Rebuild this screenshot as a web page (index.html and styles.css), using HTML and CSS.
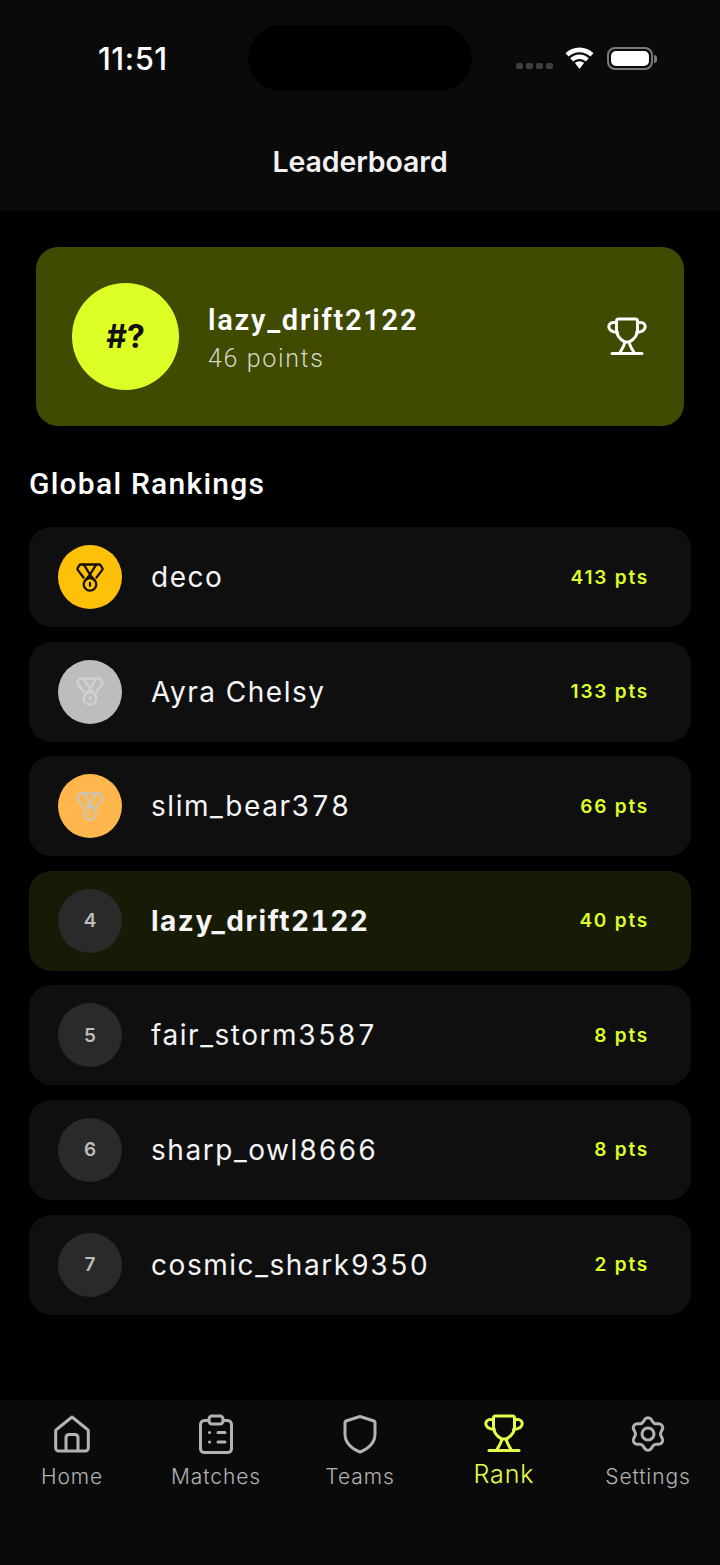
FILE: index.html
```html
<!DOCTYPE html>
<html lang="en">
<head>
<meta charset="utf-8">
<title>Leaderboard</title>
<link rel="stylesheet" href="styles.css">
</head>
<body>
<svg class="sprite" width="0" height="0" aria-hidden="true">
  <defs>
    <symbol id="medal" viewBox="0 0 28 29">
      <path d="M5 1.500h18a2 2 0 0 1 1.700.9l1.500 2.400a2 2 0 0 1-.1 2.300l-5.600 7.400M7.500 14.500L1.900 7.100a2 2 0 0 1-.1-2.300l1.500-2.400A2 2 0 0 1 5 1.500" fill="none" stroke="currentColor" stroke-width="2.300" stroke-linecap="round" stroke-linejoin="round"/>
      <path d="M8 1.800l6 9.700 6-9.700M14 11.500l-3.300 4.500M14 11.500l3.300 4.500" fill="none" stroke="currentColor" stroke-width="2.300" stroke-linejoin="round" stroke-linecap="round"/>
      <circle cx="14" cy="21.300" r="6.300" fill="none" stroke="currentColor" stroke-width="2.300"/>
      <path d="M14 19.800v3" stroke="currentColor" stroke-width="2.300" stroke-linecap="round"/>
    </symbol>
    <symbol id="trophy" viewBox="0 0 40 40">
      <path d="M11.500 2h17a2 2 0 0 1 2 2v8.500c0 6.500-4.500 10.500-8.300 12.500h-4.400C14 23 9.500 19 9.500 12.500V4a2 2 0 0 1 2-2z" fill="none" stroke="currentColor" stroke-width="3" stroke-linejoin="round"/>
      <path d="M9.500 5.500H6a4.200 4.200 0 0 0-4.200 4.200c0 3.300 3 5 8.500 5.800M30.500 5.500H34a4.200 4.200 0 0 1 4.200 4.200c0 3.300-3 5-8.500 5.800" fill="none" stroke="currentColor" stroke-width="3" stroke-linecap="round"/>
      <path d="M17.800 25c-.2 3.500-3 7-5 11M22.200 25c.2 3.500 3 7 5 11" fill="none" stroke="currentColor" stroke-width="3" stroke-linecap="round"/>
      <path d="M5 36.500h30" stroke="currentColor" stroke-width="3" stroke-linecap="round"/>
    </symbol>
  </defs>
</svg>
<div class="screen">
  <header class="top">
    <div class="status">
      <span class="time">11:51</span>
      <div class="island"></div>
      <div class="status-icons">
        <div class="signal"><i></i><i></i><i></i><i></i></div>
        <svg class="wifi" viewBox="0 0 30 23" width="31" height="23">
          <path d="M15 5.300c4.300 0 8.100 1.600 10.900 4.300L29 6.300C25.300 2.700 20.400.6 15 .6S4.700 2.700 1 6.300l3.100 3.300C6.900 6.900 10.700 5.300 15 5.300z" fill="#fff"/>
          <path d="M15 12c2.500 0 4.700 1 6.300 2.500l3-3.200C21.900 9 18.600 7.600 15 7.600S8.100 9 5.700 11.300l3 3.200C10.300 13 12.500 12 15 12z" fill="#fff"/>
          <path d="M15 14.300c-1.800 0-3.300.7-4.500 1.800L15 22l4.500-5.900c-1.200-1.100-2.700-1.800-4.500-1.800z" fill="#fff"/>
        </svg>
        <div class="battery"><div class="battery-fill"></div></div>
        <div class="battery-cap"></div>
      </div>
    </div>
    <h1 class="title">Leaderboard</h1>
  </header>

  <main class="content">
    <section class="hero">
      <div class="hero-rank">#?</div>
      <div class="hero-info">
        <div class="hero-name">lazy_drift2122</div>
        <div class="hero-points">46 points</div>
      </div>
      <svg class="hero-trophy" width="40" height="40"><use href="#trophy"/></svg>
    </section>

    <h2 class="section-title">Global Rankings</h2>

    <ul class="list">
      <li class="row">
        <div class="badge gold"><svg width="28" height="29"><use href="#medal"/></svg></div>
        <span class="name">deco</span><span class="pts">413 pts</span>
      </li>
      <li class="row">
        <div class="badge silver"><svg width="28" height="29"><use href="#medal"/></svg></div>
        <span class="name">Ayra Chelsy</span><span class="pts">133 pts</span>
      </li>
      <li class="row">
        <div class="badge bronze"><svg width="28" height="29"><use href="#medal"/></svg></div>
        <span class="name">slim_bear378</span><span class="pts">66 pts</span>
      </li>
      <li class="row me">
        <div class="badge">4</div>
        <span class="name">lazy_drift2122</span><span class="pts">40 pts</span>
      </li>
      <li class="row">
        <div class="badge">5</div>
        <span class="name">fair_storm3587</span><span class="pts">8 pts</span>
      </li>
      <li class="row">
        <div class="badge">6</div>
        <span class="name">sharp_owl8666</span><span class="pts">8 pts</span>
      </li>
      <li class="row">
        <div class="badge">7</div>
        <span class="name">cosmic_shark9350</span><span class="pts">2 pts</span>
      </li>
    </ul>
  </main>

  <nav class="tabs">
    <div class="tab">
      <svg viewBox="0 0 40 40" width="40" height="40" fill="none" stroke="currentColor" stroke-width="3" stroke-linejoin="round">
        <path d="M20 3L35.500 15.500a2 2 0 0 1 .8 1.600V34a3 3 0 0 1-3 3H6.700a3 3 0 0 1-3-3V17.100a2 2 0 0 1 .8-1.600z"/>
        <path d="M14 37V23.500a3 3 0 0 1 3-3h6a3 3 0 0 1 3 3V37"/>
      </svg>
      <span>Home</span>
    </div>
    <div class="tab">
      <svg viewBox="0 0 40 40" width="40" height="40" fill="none" stroke="currentColor" stroke-width="3" stroke-linecap="round" stroke-linejoin="round">
        <path d="M13 6.500H8.500a4 4 0 0 0-4 4V35a3.500 3.500 0 0 0 3.500 3.500h24a3.500 3.500 0 0 0 3.500-3.500V10.500a4 4 0 0 0-4-4H27"/>
        <rect x="13" y="2" width="14" height="8" rx="3"/>
        <path d="M13.500 18.500h.1M13.500 28h.1M22 18.500h7M22 28h7"/>
      </svg>
      <span>Matches</span>
    </div>
    <div class="tab">
      <svg viewBox="0 0 40 40" width="40" height="40" fill="none" stroke="currentColor" stroke-width="3" stroke-linejoin="round">
        <path d="M20 2.500L34 7a1.500 1.500 0 0 1 1 1.500V20c0 9-6.500 14.500-15 18C11.500 34.500 5 29 5 20V8.500A1.500 1.500 0 0 1 6 7z"/>
      </svg>
      <span>Teams</span>
    </div>
    <div class="tab active">
      <svg width="40" height="40"><use href="#trophy"/></svg>
      <span>Rank</span>
    </div>
    <div class="tab">
      <svg viewBox="0 0 40 40" width="40" height="40" fill="none" stroke="currentColor" stroke-width="3" stroke-linejoin="round">
        <path d="M16.500 3.500a4 4 0 0 1 7 0l1.200 2a4 4 0 0 0 3.500 2h2.500a4 4 0 0 1 3.500 6l-1.200 2.300a4 4 0 0 0 0 4l1.200 2.300a4 4 0 0 1-3.500 6h-2.500a4 4 0 0 0-3.500 2l-1.200 2a4 4 0 0 1-7 0l-1.200-2a4 4 0 0 0-3.500-2H9.300a4 4 0 0 1-3.500-6L7 19.800a4 4 0 0 0 0-4l-1.200-2.300a4 4 0 0 1 3.500-6h2.500a4 4 0 0 0 3.500-2z" transform="translate(0 2.200)"/>
        <circle cx="20" cy="20" r="6"/>
      </svg>
      <span>Settings</span>
    </div>
  </nav>
</div>
</body>
</html>
```
FILE: styles.css
```css
* { box-sizing: border-box; }
html, body { margin: 0; padding: 0; background: #000; }
.sprite { position: absolute; }
.screen {
  width: 720px;
  height: 1565px;
  display: flex;
  flex-direction: column;
  background: #000;
  color: #fff;
  font-family: Inter, "Liberation Sans", sans-serif;
  overflow: hidden;
}
.top { height: 211px; background: #0a0a0a; display: flex; flex-direction: column; flex: none; }
.status { height: 134px; position: relative; padding-top: 25px; flex: none; }
.time {
  position: absolute; left: 98px; top: 41px;
  font-size: 31px; line-height: 36px; font-weight: 500; letter-spacing: .5px;
}
.island { width: 224px; height: 66px; margin: 0 auto; border-radius: 33px; background: #000; }
.status-icons { position: absolute; left: 516px; top: 47px; display: flex; align-items: flex-start; }
.signal { display: flex; gap: 3.600px; margin-top: 16px; margin-right: 11px; }
.signal i { width: 6.500px; height: 6px; border-radius: 2px; background: #3f3f3f; }
.wifi { margin-right: 12px; }
.battery { width: 46px; height: 23px; border: 2px solid #7a7a7a; border-radius: 8px; padding: 2px; }
.battery-fill { width: 100%; height: 100%; background: #fff; border-radius: 5px; }
.battery-cap { width: 3px; height: 8px; margin: 8px 0 0 1px; background: #7a7a7a; border-radius: 0 3px 3px 0; }
.title {
  margin: 0; text-align: center;
  font-size: 28.500px; line-height: 34px; font-weight: 600; letter-spacing: -.1px; color: #f2f2f2;
  margin-top: 11px;
}
.content { flex: 1; padding: 36px 29px 0; }
.hero {
  margin: 0 7px; height: 179px; padding: 0 36px;
  background: #404a00; border-radius: 22px;
  display: flex; align-items: center;
}
.hero-rank {
  width: 107px; height: 107px; border-radius: 50%; flex: none;
  background: #deff26; color: #111;
  display: flex; align-items: center; justify-content: center;
  font-size: 32px; font-weight: 700;
}
.hero-info { margin-left: 29px; flex: 1; padding-top: 3px; }
.hero-name { font-family: Roboto, sans-serif; font-size: 29px; line-height: 36px; font-weight: 600; letter-spacing: 1.750px; }
.hero-points { font-family: Roboto, sans-serif; font-size: 25px; line-height: 32px; font-weight: 300; letter-spacing: 1.650px; color: #d6d8c8; margin-top: 5px; }
.hero-trophy { color: #fff; margin-right: 1px; }
.section-title {
  margin: 39px 0 24px 0;
  font-family: Roboto, sans-serif; font-size: 30px; line-height: 38px; font-weight: 500; letter-spacing: 1.250px;
}
.list { list-style: none; margin: 0; padding: 0; display: flex; flex-direction: column; gap: 14.600px; }
.row {
  height: 100px; padding: 0 42px 0 29px; border-radius: 22px;
  background: #0f0f0f; display: flex; align-items: center;
}
.row.me { background: #171a04; }
.badge {
  width: 64px; height: 64px; border-radius: 50%; flex: none;
  background: #2a2a2a; color: #bdbdbd;
  display: flex; align-items: center; justify-content: center;
  font-size: 19px; font-weight: 600;
}
.badge.gold { background: #ffc107; color: #161203; }
.badge.silver { background: #bdbdbd; color: #d0d0d0; }
.badge.bronze { background: #ffb74d; color: #c9c4b4; }
.name { flex: 1; margin-left: 29px; font-size: 28px; letter-spacing: 1.550px; color: #f5f5f5; font-variant-numeric: tabular-nums; }
.row.me .name { font-weight: 700; letter-spacing: 1.500px; }
.pts { font-size: 19px; font-weight: 600; letter-spacing: 1.800px; color: #deff26; }
.tabs {
  flex: none; height: 165px; background: #0a0a0a;
  display: grid; grid-template-columns: repeat(5, 1fr);
}
.tab {
  display: flex; flex-direction: column; align-items: center;
  padding-top: 14px; color: #b3b3b3; font-size: 21px; font-weight: 300; letter-spacing: .9px;
}
.tab span { margin-top: 10px; line-height: 26px; }
.tab.active { color: #e6ff4d; }
.tab.active span { font-size: 25px; font-weight: 300; line-height: 30px; margin-top: 5px; }
```
